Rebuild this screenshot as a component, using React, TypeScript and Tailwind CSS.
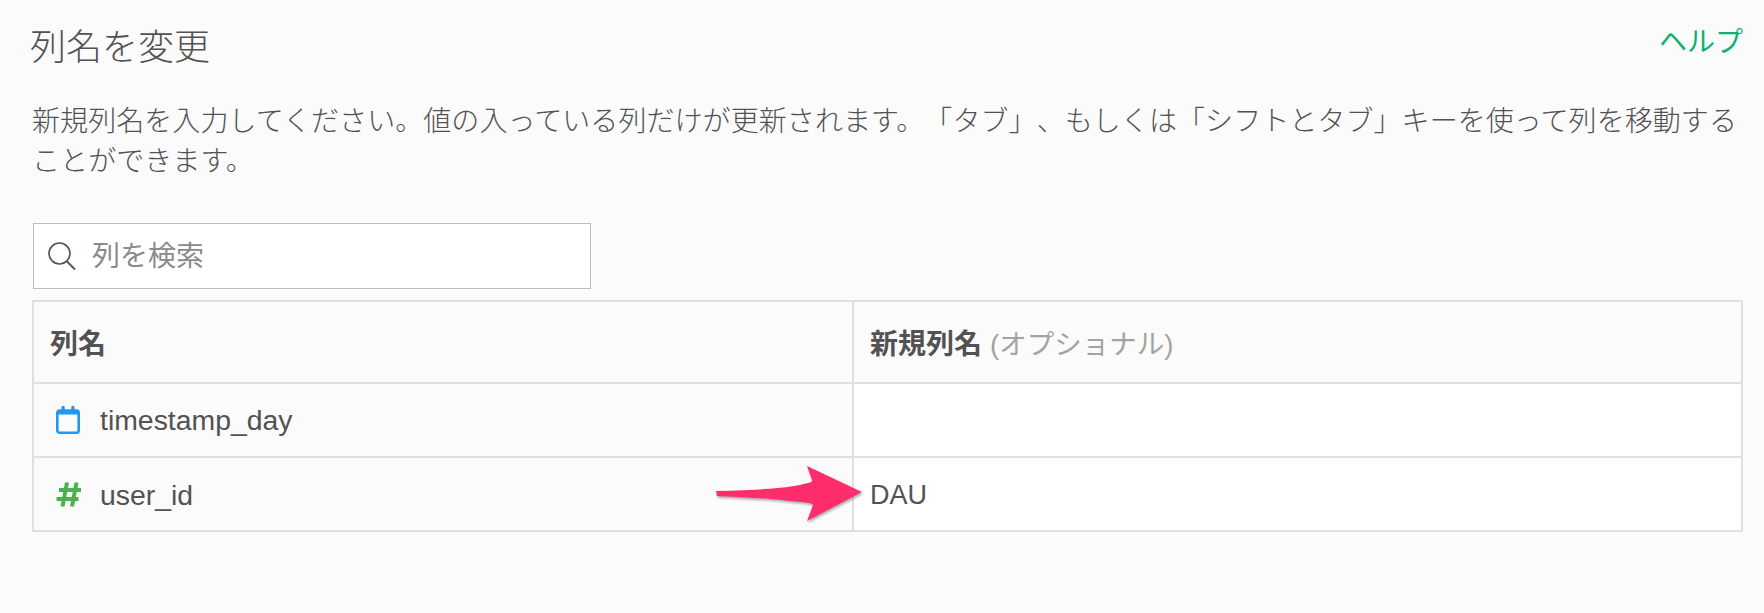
const fontStack = "font-['Liberation_Sans','Noto_Sans_CJK_JP',sans-serif]";

function CalendarIcon() {
  return (
    <svg width="24" height="28" viewBox="0 0 24 28" fill="none" className="shrink-0">
      <rect x="1.3" y="4.5" width="21.4" height="22.2" rx="2.2" stroke="#2196f3" strokeWidth="2.6" />
      <rect x="1.3" y="4.5" width="21.4" height="4" fill="#2196f3" />
      <rect x="5.5" y="0" width="3.2" height="6" rx="1" fill="#2196f3" />
      <rect x="15.3" y="0" width="3.2" height="6" rx="1" fill="#2196f3" />
    </svg>
  );
}

function HashIcon() {
  return (
    <svg width="25" height="25" viewBox="0 0 25 25" fill="none" className="shrink-0">
      <path d="M11 0.5 L6.5 24.5 M20.5 0.5 L16 24.5 M3 8 H25 M0.5 17 H22.5" stroke="#4caf50" strokeWidth="4" />
    </svg>
  );
}

function SearchIcon() {
  return (
    <svg width="28" height="28" viewBox="0 0 28 28" fill="none" className="shrink-0">
      <circle cx="11.5" cy="11.5" r="10.5" stroke="#555555" strokeWidth="1.7" />
      <path d="M19 19.5 L27 27.5" stroke="#555555" strokeWidth="1.9" />
    </svg>
  );
}

function Arrow() {
  return (
    <svg
      width="160"
      height="64"
      viewBox="0 0 160 64"
      fill="none"
      className="absolute left-[-144px] top-[0px] drop-shadow-[1px_2px_1px_rgba(0,0,0,0.3)]"
    >
      <path d="M6 33 C40 32 70 31 90 27 C97 25 103 25 102 22 L97 8 L152 34 L97 63 L103 47 C103 45 95 44 80 43 C55 40 25 39 7 38 Z" fill="#ff2d6b" />
    </svg>
  );
}

export default function App() {
  return (
    <div className={`min-h-[613px] w-[1764px] bg-[#fbfbfb] text-[#525252] [text-spacing-trim:space-all] ${fontStack}`}>
      <div className="pl-[32px] pr-[21px]">
        <div className="flex items-start justify-between">
          <h1 className="ml-[-2px] pt-[23px] text-[36px] leading-[50px] font-light">列名を変更</h1>
          <a className="pt-[25px] text-[28px] leading-[36px] text-[#10b070]">ヘルプ</a>
        </div>
        <p className="mt-[29px] w-[1712px] text-[28px] leading-[40px] font-light tracking-[0.07px]">
          新規列名を入力してください。値の入っている列だけが更新されます。「タブ」、もしくは「シフトとタブ」キーを使って列を移動することができます。
        </p>
        <div className="mt-[41px] ml-[1px] flex h-[66px] w-[558px] items-center border border-[#bdbdbd] bg-white pl-[14px]">
          <SearchIcon />
          <span className="ml-[16px] pt-[2px] text-[28px] text-[#8a8a8a]">列を検索</span>
        </div>
        <div className="mt-[11px] w-[1711px] border-2 border-[#e0e0e0]">
          <div className="flex h-[82px] border-b-2 border-[#e0e0e0]">
            <div className="flex w-[820px] items-center border-r-2 border-[#e0e0e0] pl-[16px] pt-[5px] text-[28px] font-bold">列名</div>
            <div className="flex flex-1 items-center pl-[16px] pt-[5px]">
              <span className="text-[28px] font-bold">新規列名</span>
              <span className="ml-[8px] text-[27.5px] text-[#a3a3a3]">(オプショナル)</span>
            </div>
          </div>
          <div className="flex h-[74px] border-b-2 border-[#e0e0e0]">
            <div className="flex w-[820px] items-center gap-[20px] border-r-2 border-[#e0e0e0] pl-[22px] text-[28.4px]">
              <CalendarIcon />
              <span>timestamp_day</span>
            </div>
            <div className="flex-1 bg-white" />
          </div>
          <div className="flex h-[72px]">
            <div className="flex w-[820px] items-center gap-[19px] border-r-2 border-[#e0e0e0] pl-[22px] text-[28.4px]">
              <HashIcon />
              <span className="pt-[2px]">user_id</span>
            </div>
            <div className="relative flex flex-1 items-center bg-white pl-[16px] pt-[2px] text-[27px]">
              <Arrow />
              DAU
            </div>
          </div>
        </div>
      </div>
    </div>
  );
}
